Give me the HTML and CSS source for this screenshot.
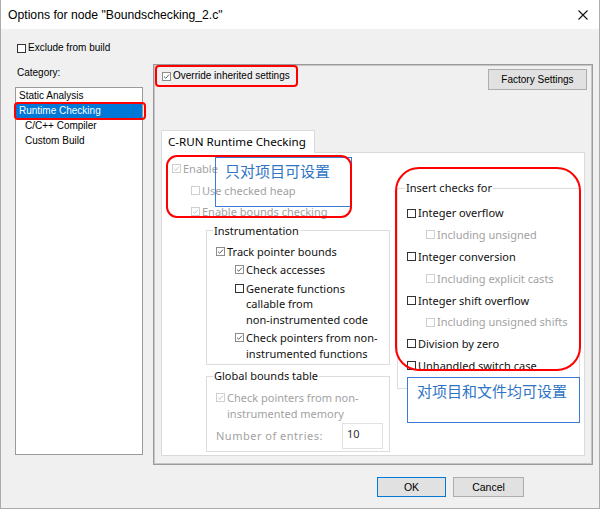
FILE: index.html
```html
<!DOCTYPE html>
<html>
<head>
<meta charset="utf-8">
<title>Options for node</title>
<link rel="stylesheet" href="styles.css">
</head>
<body>
<div class="window">
  <div class="titlebar">
    <span class="title">Options for node "Boundschecking_2.c"</span>
    <svg class="close" width="10" height="10" viewBox="0 0 10 10"><path d="M0.5 0.5L9.5 9.5M9.5 0.5L0.5 9.5" stroke="#111" stroke-width="1.1" fill="none"/></svg>
  </div>
  <div class="content">
    <div class="drow exclude"><span class="cb"></span><span>Exclude from build</span></div>
    <div class="main">
      <div class="leftcol">
        <div class="catlabel">Category:</div>
        <ul class="catlist">
          <li>Static Analysis</li>
          <li class="sel">Runtime Checking</li>
          <li class="sub">C/C++ Compiler</li>
          <li class="sub">Custom Build</li>
        </ul>
      </div>
      <div class="panel">
        <div class="toprow">
          <div class="drow override"><span class="cb on"><svg viewBox="0 0 7 7"><path d="M1 3.6L2.8 5.3L6 1.6" /></svg></span><span>Override inherited settings</span></div>
          <div class="btn factory">Factory Settings</div>
        </div>
        <div class="tabs"><div class="tab">C-RUN Runtime Checking</div></div>
        <div class="tabpanel">
          <div class="colL">
            <div class="prow dis"><span class="cb on dis"><svg viewBox="0 0 7 7"><path d="M1 3.6L2.8 5.3L6 1.6" /></svg></span><span>Enable</span></div>
            <div class="prow dis ind"><span class="cb dis"></span><span>Use checked heap</span></div>
            <div class="prow dis ind"><span class="cb on dis"><svg viewBox="0 0 7 7"><path d="M1 3.6L2.8 5.3L6 1.6" /></svg></span><span>Enable bounds checking</span></div>
            <fieldset class="grp instr">
              <legend>Instrumentation</legend>
              <div class="irow l1"><span class="cb on"><svg viewBox="0 0 7 7"><path d="M1 3.6L2.8 5.3L6 1.6" /></svg></span><span>Track pointer bounds</span></div>
              <div class="irow l2"><span class="cb on"><svg viewBox="0 0 7 7"><path d="M1 3.6L2.8 5.3L6 1.6" /></svg></span><span>Check accesses</span></div>
              <div class="irow l2"><span class="cb"></span><span>Generate functions<br>callable from<br>non-instrumented code</span></div>
              <div class="irow l2"><span class="cb on"><svg viewBox="0 0 7 7"><path d="M1 3.6L2.8 5.3L6 1.6" /></svg></span><span>Check pointers from non-<br>instrumented functions</span></div>
            </fieldset>
            <fieldset class="grp global">
              <legend>Global bounds table</legend>
              <div class="irow l1 dis"><span class="cb on dis"><svg viewBox="0 0 7 7"><path d="M1 3.6L2.8 5.3L6 1.6" /></svg></span><span>Check pointers from non-<br>instrumented memory</span></div>
              <div class="numrow"><span class="numlabel">Number of entries:</span><div class="numinput">10</div></div>
            </fieldset>
          </div>
          <div class="colR">
            <fieldset class="grp ins">
              <legend>Insert checks for</legend>
              <div class="rrow"><span class="cb"></span><span>Integer overflow</span></div>
              <div class="rrow sub dis"><span class="cb dis"></span><span>Including unsigned</span></div>
              <div class="rrow"><span class="cb"></span><span>Integer conversion</span></div>
              <div class="rrow sub dis"><span class="cb dis"></span><span>Including explicit casts</span></div>
              <div class="rrow"><span class="cb"></span><span>Integer shift overflow</span></div>
              <div class="rrow sub dis"><span class="cb dis"></span><span>Including unsigned shifts</span></div>
              <div class="rrow"><span class="cb"></span><span>Division by zero</span></div>
              <div class="rrow"><span class="cb"></span><span>Unhandled switch case</span></div>
            </fieldset>
          </div>
        </div>
      </div>
    </div>
    <div class="footer">
      <div class="btn ok">OK</div>
      <div class="btn cancel">Cancel</div>
    </div>
  </div>

  <div class="mark m-runtime"></div>
  <div class="mark m-override"></div>
  <div class="note note1"><div class="noteline">只对项目可设置</div></div>
  <div class="mark m-enable"></div>
  <div class="mark m-insert"></div>
  <div class="note note2"><div class="noteline">对项目和文件均可设置</div></div>
</div>
</body>
</html>
```

FILE: styles.css
```css
* { box-sizing: border-box; }
html, body { margin: 0; padding: 0; }
body {
  width: 600px;
  height: 509px;
  overflow: hidden;
  background: #f0f0f0;
  font-family: "Liberation Sans", Arial, sans-serif;
  font-size: 10px;
  color: #000;
}
.window {
  position: relative;
  width: 600px;
  height: 509px;
  background: #f0f0f0;
  border: 1px solid #ababab;
  border-top: none;
}
.titlebar {
  height: 29px;
  background: #fff;
  display: flex;
  align-items: center;
  justify-content: space-between;
  padding: 0 11px 0 7px;
}
.title { font-size: 12.2px; color: #000; }
.close { display: block; }

.content { padding: 0 6px 0 14px; }

/* dialog checkbox rows */
.drow { display: flex; align-items: flex-start; line-height: 16px; height: 16px; }
.drow .cb { margin-top: 3.5px; }
.exclude { margin-top: 11px; margin-left: 2px; }

.cb {
  flex: none;
  position: relative;
  width: 9px;
  height: 9px;
  border: 1px solid #333;
  background: #fff;
  margin-right: 2px;
}
.cb svg { position: absolute; left: 0; top: 0; width: 7px; height: 7px; }
.cb svg path { fill: none; stroke: #666; stroke-width: 1; }
.cb.on { border-color: #8c8c8c; }
.cb.dis { border-color: #cfcfcf; }
.cb.dis svg path { stroke: #c6c6c6; }

.main { display: flex; gap: 10px; margin-top: 8px; }
.leftcol { width: 128px; }
.catlabel { height: 23px; padding: 1px 0 0 2px; line-height: 16px; }
.catlist {
  margin: 0;
  padding: 0;
  list-style: none;
  width: 128px;
  height: 368px;
  border: 1px solid #9a9a9a;
  background: #fff;
}
.catlist li { height: 15px; line-height: 15px; padding-left: 3px; }
.catlist li.sel { background: #0078d7; color: #fff; }
.catlist li.sub { padding-left: 9px; }

.panel {
  width: 440px;
  height: 401px;
  border: 1px solid #9b9b9b;
  box-shadow: inset 1px 1px 0 #c6c6c6, inset -1px -1px 0 #c6c6c6;
}
.toprow {
  height: 25px;
  display: flex;
  justify-content: space-between;
  align-items: flex-start;
  padding: 0 5px 0 8px;
}
.override { margin-top: 3px; }
.btn {
  display: flex;
  align-items: center;
  justify-content: center;
  background: #e1e1e1;
  border: 1px solid #adadad;
  height: 21px;
}
.factory { width: 99px; margin-top: 4px; font-size: 10px; }

.tabs { margin-top: 40px; padding-left: 7px; display: flex; }
.tab {
  position: relative;
  z-index: 1;
  width: 154px;
  height: 23px;
  margin-bottom: -1px;
  background: #fff;
  border: 1px solid #dadada;
  border-bottom: none;
  padding-left: 6px;
  font-family: "Noto Sans", "Liberation Sans", sans-serif;
  font-size: 11.6px;
  line-height: 21px;
}
.tabpanel {
  margin-left: 7px;
  width: 424px;
  height: 304px;
  border: 1px solid #dadada;
  background: #fff;
  display: flex;
  align-items: flex-start;
  padding: 5px 0 0 10px;
  font-family: "Noto Sans", "Liberation Sans", sans-serif;
  font-size: 11px;
  line-height: 15.5px;
  color: #111;
}
.dis { color: #a2a2a2; }

.colL { width: 218px; }
.prow { display: flex; align-items: flex-start; padding: 3px 0; white-space: nowrap; }
.prow .cb, .irow .cb { margin-top: 3.25px; }
.prow.ind { margin-left: 19px; }

.grp {
  margin: 0;
  border: 1px solid #dcdcdc;
  min-width: 0;
}
.grp legend { padding: 0 1px; line-height: 16px; color: #111; }
.instr { margin-left: 34px; width: 184px; padding: 5px 6px 3px 6px; }
.global { margin-left: 34px; width: 184px; margin-top: 3px; padding: 6px 6px 2px 6px; }
.irow { display: flex; align-items: flex-start; white-space: nowrap; }
.irow + .irow { margin-top: 3px; }
.irow.l1 { margin-left: 3px; }
.irow.l2 { margin-left: 22px; }

.numrow { display: flex; align-items: center; margin-top: 2px; }
.numlabel { margin-left: 3px; color: #a2a2a2; letter-spacing: 0.5px; }
.numinput {
  margin-left: auto;
  width: 41px;
  height: 26px;
  border: 1px solid #e2e2e2;
  background: #fff;
  padding: 2px 0 0 4px;
  color: #333;
}

.colR { width: 183px; margin-left: 7px; margin-top: 22px; }
.ins { width: 183px; padding: 6.2px 6px 11px 7px; }
.rrow { display: flex; align-items: center; height: 21.8px; margin-left: 2px; white-space: nowrap; }
.rrow.sub { margin-left: 21px; }

.footer {
  display: flex;
  justify-content: flex-end;
  gap: 7px;
  margin-top: 12px;
  padding-right: 69px;
}
.footer .btn { height: 20px; font-size: 10.5px; }
.ok { width: 69px; border-color: #0078d7; }
.cancel { width: 71px; }

/* annotations */
.mark { position: absolute; border: 2px solid #ff0000; }
.m-runtime { left: 13px; top: 102px; width: 132px; height: 18px; border-radius: 4px; }
.m-override { left: 154px; top: 65px; width: 143px; height: 22px; border-radius: 4px; }
.m-enable { left: 165px; top: 155px; width: 186px; height: 63px; border-radius: 11px; }
.m-insert { left: 394px; top: 167px; width: 186px; height: 204px; border-radius: 24px; }
.note {
  position: absolute;
  border: 1px solid #3a7bd5;
  font-family: "Noto Sans CJK SC", "Noto Sans", sans-serif;
  font-size: 15px;
  color: #2e75c5;
}
.note1 { left: 214px; top: 157px; width: 137px; height: 50px; }
.note1 .noteline { padding: 4px 0 1px 9px; line-height: 18px; }
.note2 { left: 406px; top: 377px; width: 173px; height: 46px; background: #fff; }
.note2 .noteline { padding: 3px 0 0 9px; line-height: 20px; }
```
